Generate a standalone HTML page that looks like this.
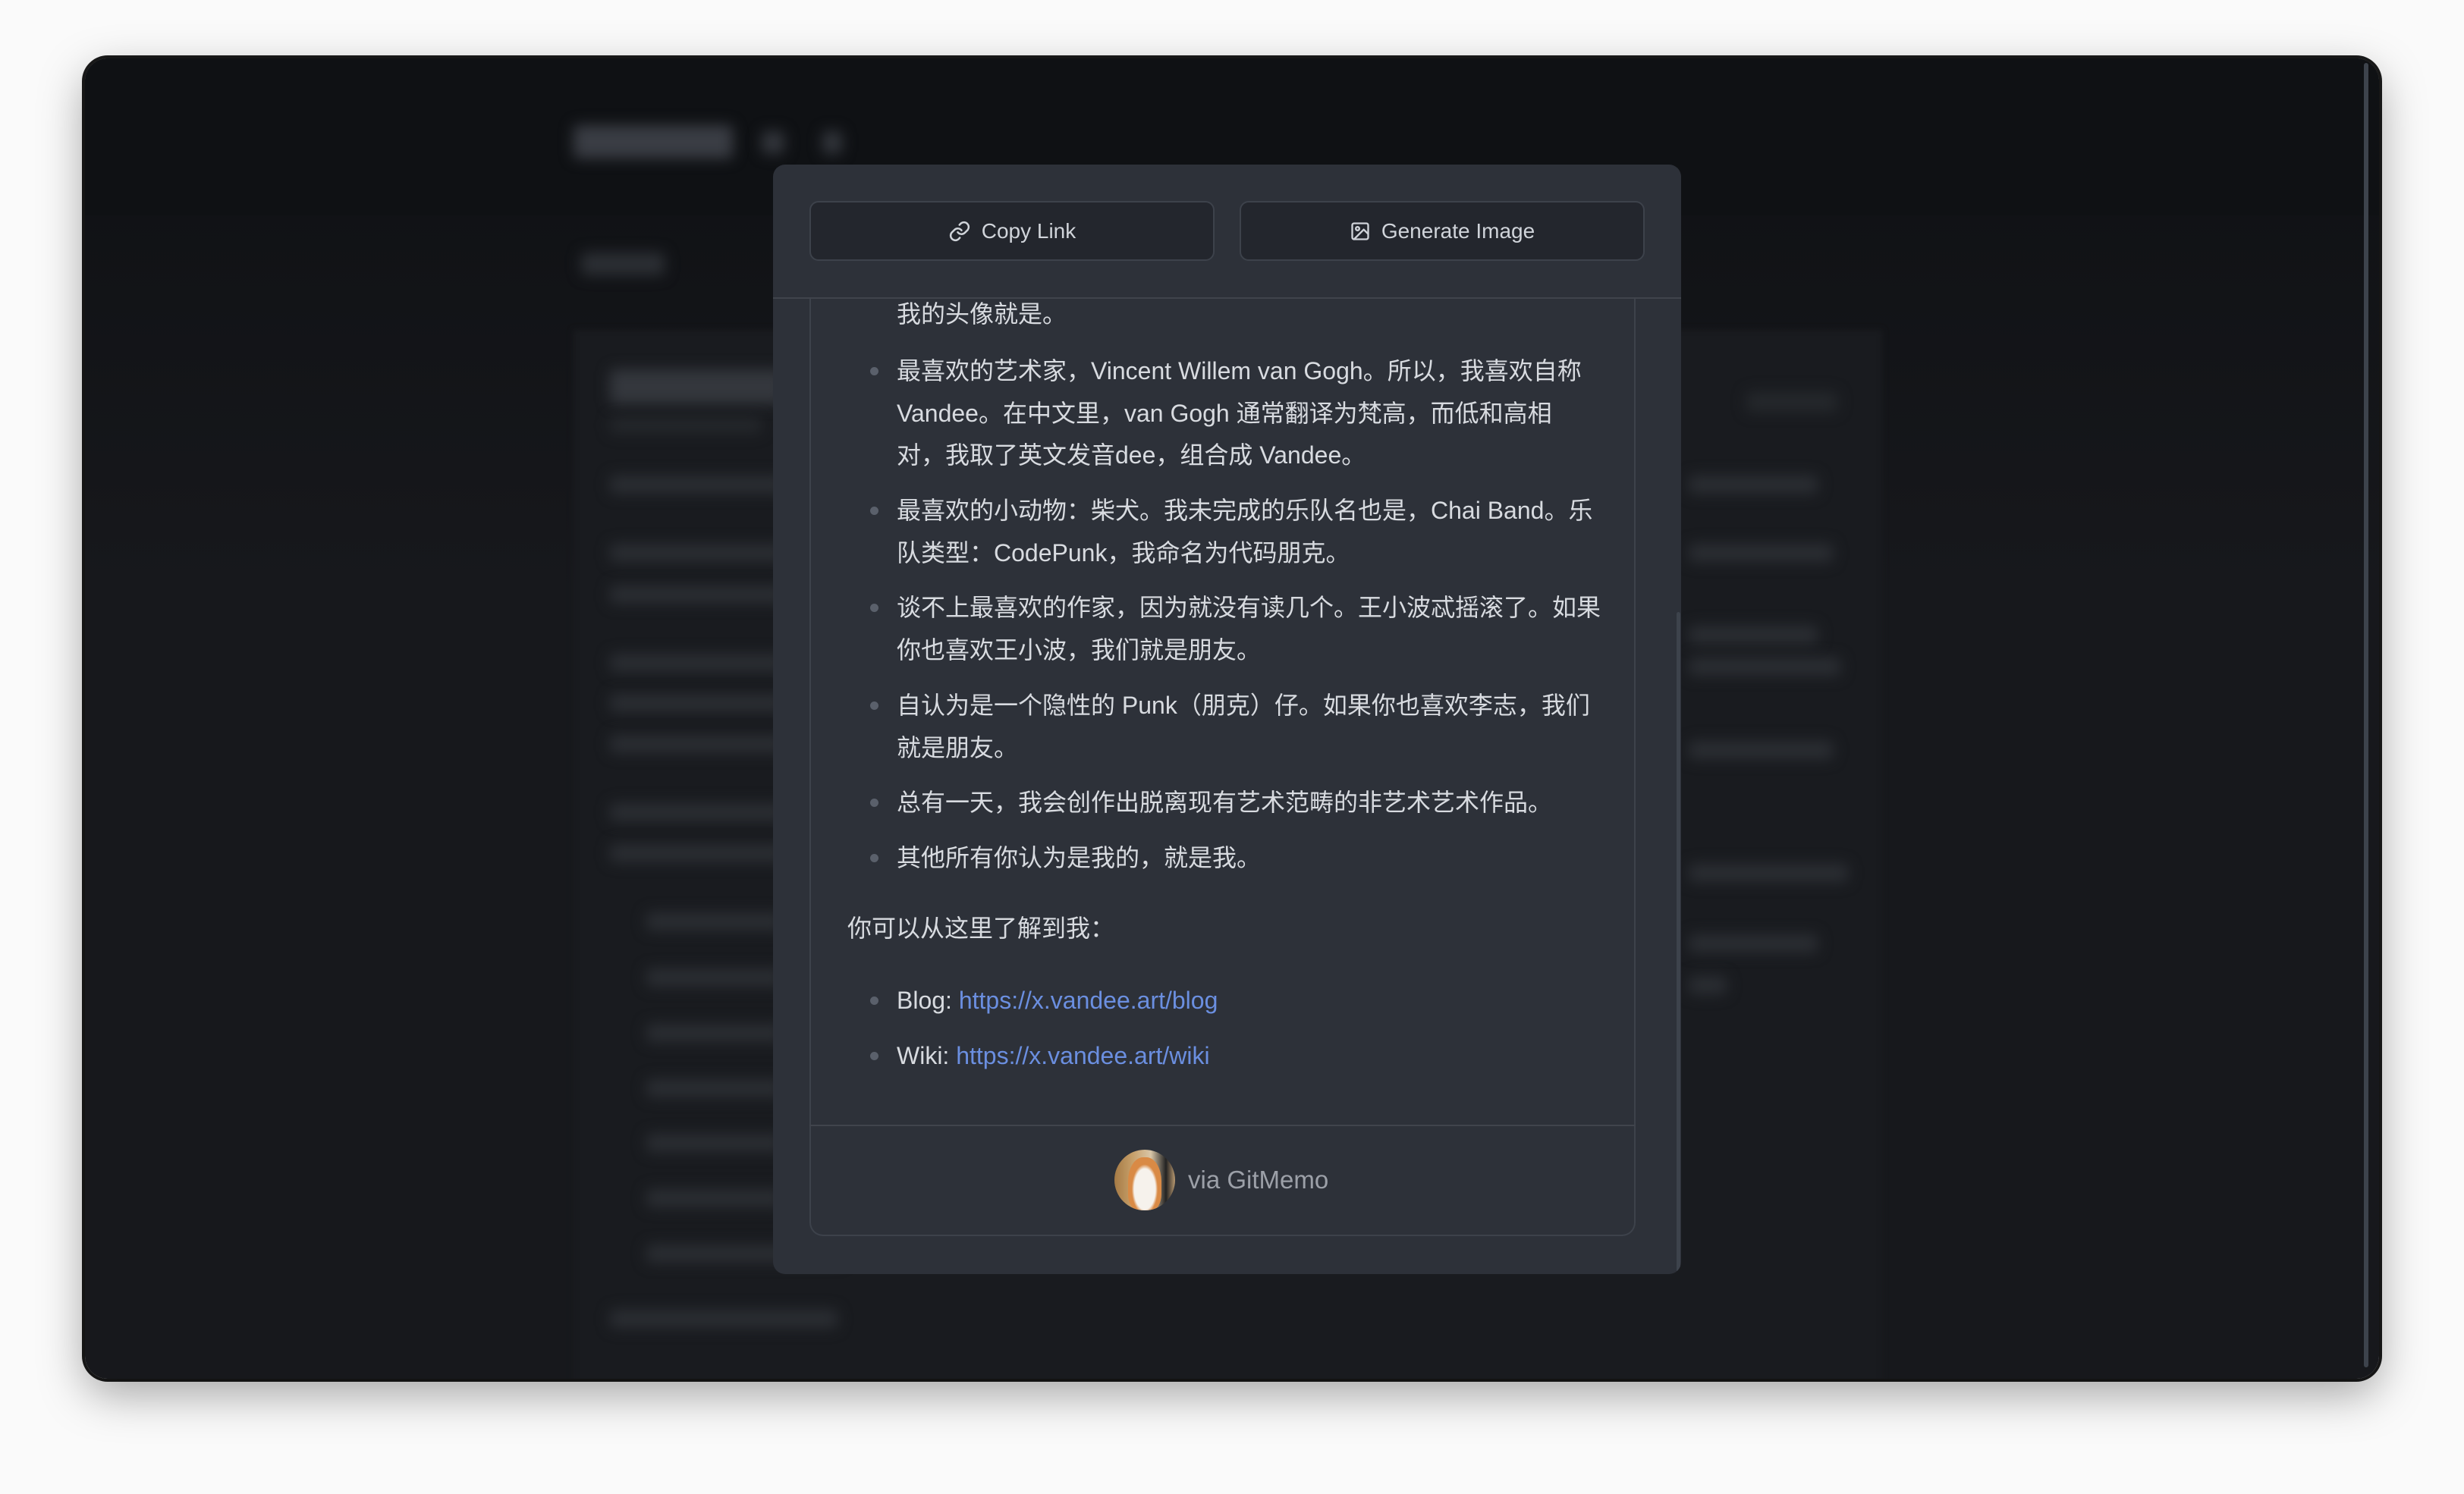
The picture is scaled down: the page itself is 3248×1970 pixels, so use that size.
<!DOCTYPE html>
<html><head><meta charset="utf-8"><style>
*{margin:0;padding:0;box-sizing:border-box}
body{width:3248px;height:1970px;background:#fafafa;position:relative;overflow:hidden;font-family:"Liberation Sans","Noto Sans CJK SC",sans-serif}
#win{position:absolute;left:112px;top:77px;width:3024px;height:1741px;border-radius:30px;background:linear-gradient(#0e1013,#17181c 40%,#17181c);box-shadow:0 20px 60px rgba(0,0,0,.35),0 0 0 4px #1a1a1a;overflow:hidden}
.bl{position:absolute;filter:blur(9px);background:#33363c;border-radius:6px}
#modal{position:absolute;left:1019px;top:217px;width:1197px;height:1463px;background:#2d3139;border-radius:16px;overflow:hidden}
.btn{position:absolute;top:48px;height:79px;width:534px;background:#23262d;border:2px solid #3d424b;border-radius:12px;color:#d0d4da;font-size:28px;display:flex;align-items:center;justify-content:center;gap:14px}
#card{position:absolute;left:48px;top:177px;width:1089px;height:1236px;border:2px solid #3d424b;border-top:none;border-radius:0 0 18px 18px;overflow:hidden}
.t{position:absolute;left:113px;height:56px;line-height:56px;font-size:32px;color:#d8dbe0;white-space:nowrap}
.d{position:absolute;left:78px;width:11px;height:11px;border-radius:50%;background:#5a606b}
a{color:#6b8fe0;text-decoration:none}
</style></head><body>
<div id="win">
  <div style="position:absolute;left:0;top:0;right:0;height:207px;background:#0f1114"></div>
  <div class="bl" style="left:644px;top:88px;width:210px;height:44px;background:#3a3d44"></div>
  <div class="bl" style="left:892px;top:96px;width:30px;height:30px"></div>
  <div class="bl" style="left:972px;top:96px;width:26px;height:30px"></div>
  <div class="bl" style="left:654px;top:256px;width:110px;height:30px;background:#2c2f34"></div>
  <div style="position:absolute;left:644px;top:358px;width:1725px;height:1400px;background:#191b1f;filter:blur(4px)"></div>
  <div class="bl" style="left:692px;top:410px;width:230px;height:46px;background:#34373d"></div>
  <div class="bl" style="left:692px;top:474px;width:200px;height:20px;background:#25282c"></div>
  <div class="bl" style="left:2190px;top:440px;width:120px;height:26px;background:#25282c"></div>
  <div class="bl" style="left:692px;top:550px;width:230px;height:24px;background:#2b2e33"></div>
  <div class="bl" style="left:692px;top:640px;width:230px;height:24px;background:#2b2e33"></div>
  <div class="bl" style="left:692px;top:695px;width:230px;height:24px;background:#2b2e33"></div>
  <div class="bl" style="left:692px;top:785px;width:230px;height:24px;background:#2b2e33"></div>
  <div class="bl" style="left:692px;top:838px;width:230px;height:24px;background:#2b2e33"></div>
  <div class="bl" style="left:692px;top:892px;width:230px;height:24px;background:#2b2e33"></div>
  <div class="bl" style="left:692px;top:982px;width:230px;height:24px;background:#2b2e33"></div>
  <div class="bl" style="left:692px;top:1036px;width:230px;height:24px;background:#2b2e33"></div>
  <div class="bl" style="left:740px;top:1126px;width:180px;height:24px;background:#2b2e33"></div>
  <div class="bl" style="left:740px;top:1200px;width:180px;height:24px;background:#2b2e33"></div>
  <div class="bl" style="left:740px;top:1273px;width:180px;height:24px;background:#2b2e33"></div>
  <div class="bl" style="left:740px;top:1346px;width:180px;height:24px;background:#2b2e33"></div>
  <div class="bl" style="left:740px;top:1418px;width:180px;height:24px;background:#2b2e33"></div>
  <div class="bl" style="left:740px;top:1491px;width:180px;height:24px;background:#2b2e33"></div>
  <div class="bl" style="left:740px;top:1564px;width:260px;height:24px;background:#2b2e33"></div>
  <div class="bl" style="left:692px;top:1650px;width:300px;height:24px;background:#2b2e33"></div>
  <div class="bl" style="left:2114px;top:550px;width:170px;height:24px;background:#2b2e33"></div>
  <div class="bl" style="left:2114px;top:640px;width:190px;height:24px;background:#2b2e33"></div>
  <div class="bl" style="left:2114px;top:748px;width:170px;height:24px;background:#2b2e33"></div>
  <div class="bl" style="left:2114px;top:790px;width:200px;height:24px;background:#2b2e33"></div>
  <div class="bl" style="left:2114px;top:900px;width:190px;height:24px;background:#2b2e33"></div>
  <div class="bl" style="left:2114px;top:1062px;width:210px;height:24px;background:#2b2e33"></div>
  <div class="bl" style="left:2114px;top:1155px;width:170px;height:24px;background:#2b2e33"></div>
  <div class="bl" style="left:2114px;top:1210px;width:50px;height:24px;background:#2b2e33"></div>
  <div style="position:absolute;left:3004px;top:6px;width:6px;height:1720px;background:#3d434c;border-radius:3px"></div>
</div>
<div id="modal">
  <div class="btn" style="left:48px"><svg width="30" height="30" viewBox="0 0 24 24" fill="none" stroke="#d0d4da" stroke-width="2" stroke-linecap="round"><path d="M10 13a5 5 0 0 0 7.5.5l3-3a5 5 0 0 0-7-7l-1.7 1.7"/><path d="M14 11a5 5 0 0 0-7.5-.5l-3 3a5 5 0 0 0 7 7l1.7-1.7"/></svg>Copy Link</div>
  <div class="btn" style="left:615px"><svg width="28" height="28" viewBox="0 0 24 24" fill="none" stroke="#d0d4da" stroke-width="2" stroke-linecap="round" stroke-linejoin="round"><rect x="3" y="3" width="18" height="18" rx="2"/><circle cx="9" cy="9" r="2"/><path d="M21 15l-5-5L5 21"/></svg>Generate Image</div>
  <div style="position:absolute;left:0;right:0;top:175px;height:2px;background:#40444c"></div>
  <div id="card">
    <div class="t" style="top:-8px">我的头像就是。</div>
    <div class="d" style="top:90px"></div><div class="t" style="top:67px">最喜欢的艺术家，Vincent Willem van Gogh。所以，我喜欢自称</div>
    <div class="t" style="top:123px">Vandee。在中文里，van Gogh 通常翻译为梵高，而低和高相</div>
    <div class="t" style="top:178px">对，我取了英文发音dee，组合成 Vandee。</div>
    <div class="d" style="top:274px"></div><div class="t" style="top:251px">最喜欢的小动物：柴犬。我未完成的乐队名也是，Chai Band。乐</div>
    <div class="t" style="top:307px">队类型：CodePunk，我命名为代码朋克。</div>
    <div class="d" style="top:402px"></div><div class="t" style="top:379px">谈不上最喜欢的作家，因为就没有读几个。王小波忒摇滚了。如果</div>
    <div class="t" style="top:435px">你也喜欢王小波，我们就是朋友。</div>
    <div class="d" style="top:531px"></div><div class="t" style="top:508px">自认为是一个隐性的 Punk（朋克）仔。如果你也喜欢李志，我们</div>
    <div class="t" style="top:564px">就是朋友。</div>
    <div class="d" style="top:659px"></div><div class="t" style="top:636px">总有一天，我会创作出脱离现有艺术范畴的非艺术艺术作品。</div>
    <div class="d" style="top:732px"></div><div class="t" style="top:709px">其他所有你认为是我的，就是我。</div>
    <div class="t" style="top:802px;left:48px">你可以从这里了解到我：</div>
    <div class="d" style="top:920px"></div><div class="t" style="top:897px">Blog: <a>https://x.vandee.art/blog</a></div>
    <div class="d" style="top:993px"></div><div class="t" style="top:970px">Wiki: <a>https://x.vandee.art/wiki</a></div>
  </div>
  <div style="position:absolute;left:48px;width:1089px;top:1266px;height:2px;background:#40444c"></div>
  <div style="position:absolute;left:450px;top:1299px;width:80px;height:80px;border-radius:50%;overflow:hidden;background:linear-gradient(90deg,#a57a45,#c7a06a 30%,#d9c6a8 60%,#222 85%,#b89870)">
    <div style="position:absolute;left:18px;top:10px;width:44px;height:70px;border-radius:45% 45% 30% 30%;background:radial-gradient(ellipse at 50% 60%,#f6f2ec 0 45%,#d98a45 55%)"></div>
  </div>
  <div style="position:absolute;left:547px;top:1314px;font-size:33px;line-height:50px;color:#9ca0a8">via GitMemo</div>
  <div style="position:absolute;left:1191px;top:590px;width:5px;height:870px;background:#3d434c;border-radius:3px"></div>
</div>
</body></html>
